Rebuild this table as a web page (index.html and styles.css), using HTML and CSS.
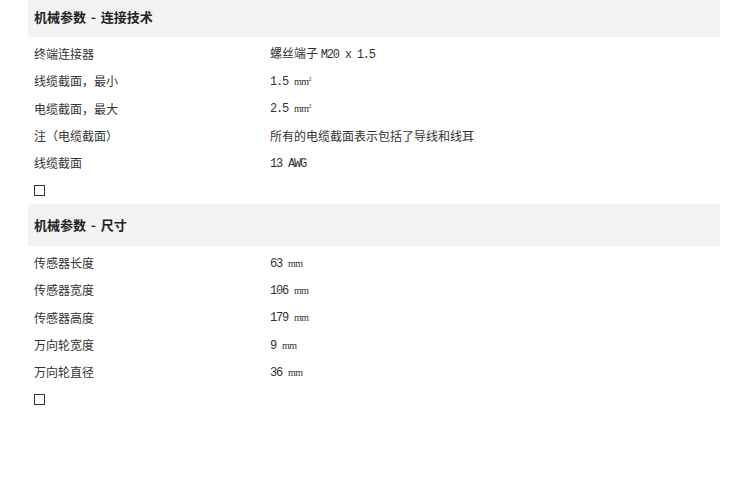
FILE: index.html
```html
<!DOCTYPE html>
<html lang="zh-CN">

<head>
    <meta charset="UTF-8">
    <meta name="viewport" content="width=device-width, initial-scale=1.0">
    <title>机械参数</title>
    <link rel="stylesheet" href="styles.css">
</head>

<body class="main">
    <div class="spec">
        <!-- 连接技术 -->
        <section class="group group--first">
            <h2 class="group__title">机械参数 - 连接技术</h2>
            <div class="group__rows">
                <div class="row"><span class="row__label">终端连接器</span><span class="row__value">螺丝端子 <span class="en">M20 x 1.5</span></span></div>
                <div class="row"><span class="row__label">线缆截面，最小</span><span class="row__value"><span class="en">1.5 </span><span class="unit">mm<sup>2</sup></span></span></div>
                <div class="row"><span class="row__label">电缆截面，最大</span><span class="row__value"><span class="en">2.5 </span><span class="unit">mm<sup>2</sup></span></span></div>
                <div class="row"><span class="row__label">注（电缆截面）</span><span class="row__value">所有的电缆截面表示包括了导线和线耳</span></div>
                <div class="row"><span class="row__label">线缆截面</span><span class="row__value"><span class="en">13 AWG</span></span></div>
                <div class="row"><span class="box"></span></div>
            </div>
        </section>

        <!-- 尺寸 -->
        <section class="group">
            <h2 class="group__title">机械参数 - 尺寸</h2>
            <div class="group__rows">
                <div class="row"><span class="row__label">传感器长度</span><span class="row__value"><span class="en">63 </span><span class="unit">mm</span></span></div>
                <div class="row"><span class="row__label">传感器宽度</span><span class="row__value"><span class="en">106 </span><span class="unit">mm</span></span></div>
                <div class="row"><span class="row__label">传感器高度</span><span class="row__value"><span class="en">179 </span><span class="unit">mm</span></span></div>
                <div class="row"><span class="row__label">万向轮宽度</span><span class="row__value"><span class="en">9 </span><span class="unit">mm</span></span></div>
                <div class="row"><span class="row__label">万向轮直径</span><span class="row__value"><span class="en">36 </span><span class="unit">mm</span></span></div>
                <div class="row"><span class="box"></span></div>
            </div>
        </section>
    </div>
</body>

</html>
```

FILE: styles.css
```css
* {
    padding: 0;
    margin: 0;
    box-sizing: border-box;
}

.main {
    background-color: #ffffff;
    color: #2b2b2b;
    font-family: "Noto Sans CJK SC", "Noto Sans", sans-serif;
    font-size: 12px;
}

/* Contenedor */
.spec {
    margin: 0 30px 0 28px;
}

.group--first {
    margin-top: -5px;
}

.group__title {
    display: flex;
    align-items: center;
    height: 42px;
    padding: 0 6px;
    background-color: #f3f3f3;
    font-size: 13px;
    font-weight: 600;
    color: #222222;
    word-spacing: 2px;
}

.group__rows {
    padding-top: 3px;
}

/* Filas */
.row {
    display: grid;
    grid-template-columns: 236px 1fr;
    align-items: center;
    height: 27.33px;
    padding: 0 6px;
    line-height: 17px;
}

.row__label,
.row__value {
    color: #333333;
}

.en {
    font-family: "Liberation Mono", monospace;
    font-size: 12px;
    letter-spacing: -1.2px;
}

/* unidades: mm y mm² */
.unit {
    font-family: "Liberation Serif", serif;
    font-size: 10px;
    letter-spacing: -0.6px;
}

.unit sup {
    font-size: 6px;
    vertical-align: 4px;
    line-height: 0;
}

.box {
    display: inline-block;
    width: 11px;
    height: 11px;
    border: 1px solid #333333;
}
```
